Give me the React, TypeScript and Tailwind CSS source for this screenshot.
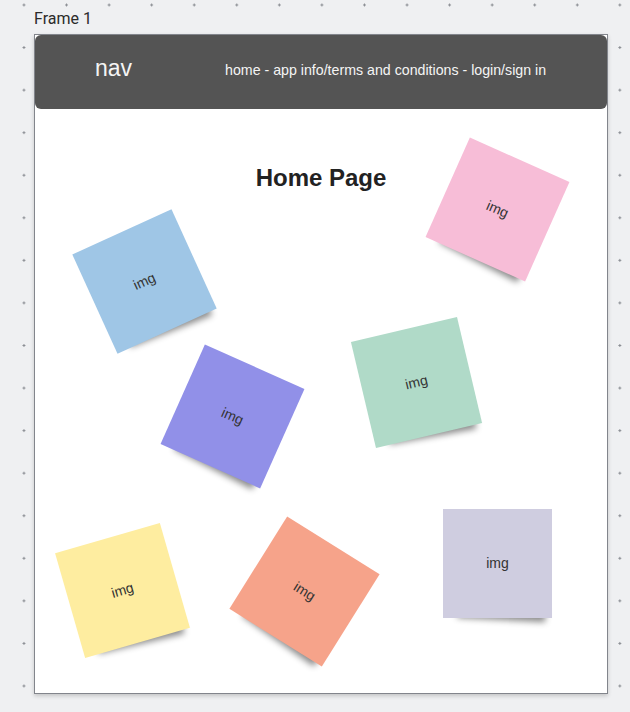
const notes = [
  { pos: "left-[55px] top-[192px] rotate-[-24.5deg]", face: "bg-[#9fc6e6]" },
  { pos: "left-[408px] top-[120px] rotate-[24deg]", face: "bg-[#f7bdd7]" },
  { pos: "left-[143px] top-[327px] rotate-[24deg]", face: "bg-[#9190e8]" },
  { pos: "left-[327px] top-[293px] rotate-[-13.3deg]", face: "bg-[#b0dac8]" },
  { pos: "left-[33px] top-[501px] rotate-[-16deg]", face: "bg-[#feeda0]" },
  { pos: "left-[215px] top-[502px] rotate-[32deg]", face: "bg-[#f6a38a]" },
  { pos: "left-[408px] top-[474px] rotate-0", face: "bg-[#cfcde0]" },
];

const Note = ({ pos, face }: { pos: string; face: string }) => (
  <div className={`absolute w-[109px] h-[109px] ${pos}`}>
    {/* curled shadow under the bottom edge */}
    <div className="absolute left-[14%] right-[5%] bottom-[6px] h-[14px] rotate-[3deg] shadow-[0_8px_6px_rgba(0,0,0,0.45)]" />
    <div
      className={`relative w-full h-full flex items-center justify-center text-[14px] text-[#333] ${face}`}
    >
      img
    </div>
  </div>
);

export default function App() {
  return (
    <div className="w-[630px] h-[712px] bg-[#eff0f2] bg-[radial-gradient(circle,#8b8e94_1px,transparent_1.4px)] bg-[length:42.57px_42.57px] bg-[position:2.7px_-16.3px] overflow-hidden font-['Liberation_Sans',Arial,sans-serif]">
      <div className="pl-[34px] pt-[9px] h-[34px] font-['Roboto',sans-serif] text-[16px] leading-[20px] text-[#2b2b2b]">
        Frame 1
      </div>
      <div className="relative ml-[34px] w-[574px] h-[660px] bg-white border border-[#82858c] shadow-[0_2px_4px_rgba(0,0,0,0.18)]">
        <nav className="h-[74px] rounded-md bg-[#545454] flex items-center text-[#f4f4f4]">
          <span className="ml-[60px] text-[23px] -mt-[8px]">nav</span>
          <span className="ml-[93px] text-[14.2px] -mt-[2px]">
            home - app info/terms and conditions - login/sign in
          </span>
        </nav>
        <h1 className="mt-[51px] text-center text-[24px] font-bold text-[#222]">Home Page</h1>
        {notes.map((n, i) => (
          <Note key={i} pos={n.pos} face={n.face} />
        ))}
      </div>
    </div>
  );
}
